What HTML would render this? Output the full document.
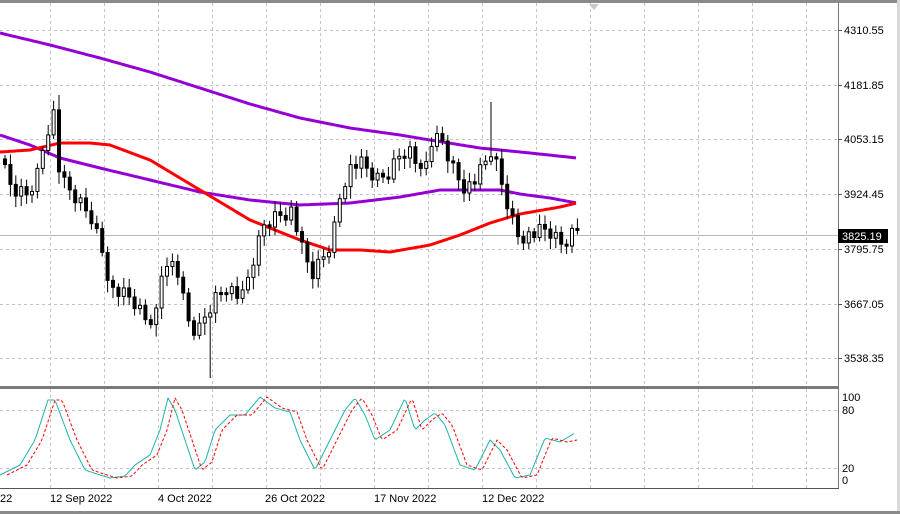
<!DOCTYPE html>
<html><head><meta charset="utf-8"><style>
html,body{margin:0;padding:0;background:#fff;width:900px;height:514px;overflow:hidden;font-family:"Liberation Sans",sans-serif}
svg text{font-family:"Liberation Sans",sans-serif;font-size:11px;fill:#000}
</style></head><body>
<svg id="s" width="900" height="514" xmlns="http://www.w3.org/2000/svg">
<rect x="0" y="0" width="900" height="514" fill="#fff"/>
<rect x="0" y="0" width="897" height="3" fill="#8a8a8a"/>
<rect x="897" y="0" width="3" height="514" fill="#d8d8d8"/>
<rect x="0" y="511" width="900" height="3" fill="#8a8a8a"/>
<g id="grid" stroke="#c4c4c4" stroke-dasharray="3,3" stroke-width="1"></g>
<line x1="0" y1="235.5" x2="838" y2="235.5" stroke="#b8b8b8"/>
<g id="ma"></g>
<g id="c"></g>
<g id="st" fill="none"></g>
<line x1="838.5" y1="3" x2="838.5" y2="489" stroke="#777"/>
<rect x="0" y="386" width="839" height="3" fill="#7a7a7a"/>
<line x1="0" y1="488.5" x2="839" y2="488.5" stroke="#555"/>
<polygon points="589,4 599,4 594,10" fill="#c8c8c8"/>
<g id="lab"></g>
<rect x="838" y="229" width="50" height="14" fill="#000"/>
<text x="842" y="240" style="fill:#fff">3825.19</text>
<text x="842" y="401">100</text><text x="842" y="414">80</text>
<text x="842" y="472">20</text><text x="842" y="484">0</text>
<text x="0" y="502">22</text>
<text x="50" y="502">12 Sep 2022</text>
<text x="158" y="502">4 Oct 2022</text>
<text x="265" y="502">26 Oct 2022</text>
<text x="374" y="502">17 Nov 2022</text>
<text x="482" y="502">12 Dec 2022</text>
</svg>
<script>
var NS="http://www.w3.org/2000/svg";
function el(p,t,a){var e=document.createElementNS(NS,t);for(var k in a)e.setAttribute(k,a[k]);p.appendChild(e);return e;}
var g=document.getElementById('grid');
[30,85,139,194,249,304,358].forEach(function(y){el(g,'line',{x1:0,y1:y+.5,x2:838,y2:y+.5});});
[410,468].forEach(function(y){el(g,'line',{x1:0,y1:y+.5,x2:838,y2:y+.5});});
for(var x=50;x<838;x+=54){el(g,'line',{x1:x+.5,y1:3,x2:x+.5,y2:386});el(g,'line',{x1:x+.5,y1:389,x2:x+.5,y2:488});}
var lab=document.getElementById('lab');
[["4310.55",30],["4181.85",85],["4053.15",139],["3924.45",194],["3795.75",249],["3667.05",304],["3538.35",358]].forEach(function(a){
el(lab,'line',{x1:838,y1:a[1]+.5,x2:842,y2:a[1]+.5,stroke:'#555'});var t=el(lab,'text',{x:844,y:a[1]+4});t.textContent=a[0];});
function interp(pts,x){for(var i=0;i<pts.length-1;i++){if(x<=pts[i+1][0]){var a=pts[i],b=pts[i+1];return a[1]+(b[1]-a[1])*(x-a[0])/(b[0]-a[0]);}}return pts[pts.length-1][1];}
function line(pts,col,w,dash,par){var d='';for(var x=pts[0][0];x<=pts[pts.length-1][0];x+=2){d+=(d?'L':'M')+x+','+interp(pts,x).toFixed(1);}
var a={d:d,stroke:col,'stroke-width':w,fill:'none','stroke-linejoin':'round'};if(dash)a['stroke-dasharray']=dash;el(par,'path',a);}
var ma=document.getElementById('ma');
line([[0,33],[50,45],[100,58],[150,72],[200,88],[250,104],[300,118],[350,128],[400,135],[430,140],[480,148],[530,153],[577,158]],'#9400d3',3,null,ma);
line([[0,135],[30,145],[60,158],[100,168],[150,180],[200,192],[250,200],[300,205],[350,203],[400,197],[440,190],[500,190],[520,194],[550,198],[577,203]],'#9400d3',3,null,ma);
line([[0,152],[30,150],[60,143],[90,143],[110,145],[150,160],[200,190],[250,220],[300,240],[330,250],[360,250],[390,252],[430,245],[460,235],[490,223],[520,214],[560,207],[577,203]],'#ff0000',3,null,ma);
var cl=[[0,165],[10,190],[25,195],[35,175],[45,130],[52,112],[58,180],[75,200],[90,218],[100,250],[110,290],[130,300],[145,322],[155,312],[162,255],[175,270],[185,320],[195,335],[205,312],[215,295],[225,285],[240,300],[250,265],[262,225],[275,215],[290,210],[300,250],[310,275],[320,260],[330,240],[340,185],[350,165],[360,165],[375,180],[385,175],[400,150],[410,150],[420,180],[430,140],[440,140],[450,165],[460,185],[470,185],[480,170],[490,150],[500,185],[515,235],[530,235],[545,230],[560,245],[577,225]];
var c=document.getElementById('c');var prev=interp(cl,0)-6;
for(var i=0;i<107;i++){var x=3+i*5.4;var cy=interp(cl,x)+((i*37)%11-5)*1.6;var o=prev;var hi=Math.min(o,cy)-4-((i*13)%7);var lo=Math.max(o,cy)+4+((i*17)%9);
if(i==90){hi=102;}if(i==38){lo=378;}if(i==10){hi=95;}
el(c,'line',{x1:x+2,y1:hi,x2:x+2,y2:lo,stroke:'#000'});
var bodyTop=Math.min(o,cy),h=Math.max(2,Math.abs(o-cy));
el(c,'rect',{x:x+.5,y:bodyTop,width:3,height:h,fill:cy<o?'#fff':'#000',stroke:'#000','stroke-width':1});
prev=cy;}
var st=document.getElementById('st');
var sp=[[0,475],[20,465],[35,440],[48,400],[55,400],[70,440],[85,470],[100,475],[110,478],[125,476],[135,465],[150,455],[160,430],[168,398],[175,410],[185,440],[195,470],[205,462],[215,430],[230,415],[245,415],[260,397],[275,408],[290,412],[300,440],[315,470],[330,440],[345,410],[355,398],[365,415],[375,440],[390,430],[405,398],[415,430],[425,420],[435,413],[445,425],[460,465],[475,470],[490,440],[500,450],[515,478],[530,475],[545,438],[560,442],[575,433]];
line(sp,'#20b2aa',1,null,st);
line(sp.map(function(p){return [p[0]+7,p[1]];}).filter(function(p){return p[0]<=577;}).concat([[577,440]]),'#ff0000',1,'3,2',st);
</script>
</body></html>
